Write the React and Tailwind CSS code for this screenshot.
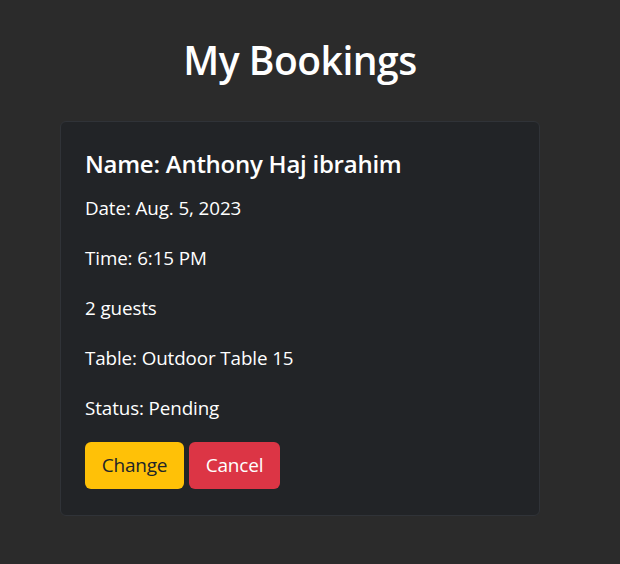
const BOOKING = {
  name: 'Anthony Haj ibrahim',
  date: 'Aug. 5, 2023',
  time: '6:15 PM',
  guests: 2,
  table: 'Outdoor Table 15',
  status: 'Pending',
}

function App() {
  return (
    <div className="min-h-screen bg-[#2b2b2b] pt-[36px] font-['Open_Sans','Noto_Sans',sans-serif] text-white">
      <div className="w-[600px]">

        {/* Title */}
        <h1 className="text-center text-[39px] font-semibold leading-[48px] tracking-[-0.5px]">My Bookings</h1>

        {/* Booking card */}
        <div className="mx-auto mt-[37px] w-[480px] rounded-md border border-[#303338] bg-[#222427] px-6 pt-6 pb-[26px]">
          <h4 className="pt-[1px] text-[24px] font-semibold leading-[34px] tracking-[-0.25px]">Name: {BOOKING.name}</h4>
          <div className="mt-[15px] space-y-[26px] text-[18.8px] leading-6 tracking-[-0.1px]">
            <p>Date: {BOOKING.date}</p>
            <p>Time: {BOOKING.time}</p>
            <p>{BOOKING.guests} guests</p>
            <p>Table: {BOOKING.table}</p>
            <p>Status: {BOOKING.status}</p>
          </div>

          <div className="mt-[22px] flex gap-[5px]">
            <button
              type="button"
              className="h-[47px] w-[99px] rounded-md bg-[#ffc107] text-[19px] text-[#212529] tracking-[-0.2px]"
            >
              Change
            </button>
            <button
              type="button"
              className="h-[47px] w-[91px] rounded-md bg-[#dc3545] text-[19px] text-white tracking-[-0.2px]"
            >
              Cancel
            </button>
          </div>
        </div>

      </div>
    </div>
  )
}

export default App
